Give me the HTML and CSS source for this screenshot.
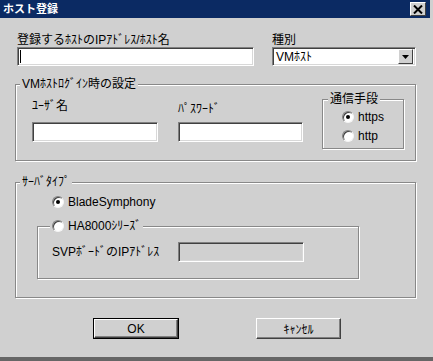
FILE: index.html
```html
<!DOCTYPE html>
<html lang="ja">
<head>
  <meta charset="UTF-8" />
  <title>ホスト登録</title>
  <link rel="stylesheet" href="styles.css">
</head>
<body>
  <div class="window">
    <div class="titlebar">
      <span class="title">ホスト登録</span>
      <span class="close">
        <svg width="10" height="9" viewBox="0 0 10 9"><path d="M1 0.5 L9 8.5 M9 0.5 L1 8.5" stroke="#000" stroke-width="2" fill="none"/></svg>
      </span>
    </div>

    <div class="content">
      <!-- host / kind -->
      <div class="row-top">
        <div class="host">
          <div class="label">登録するﾎｽﾄのIPｱﾄﾞﾚｽ/ﾎｽﾄ名</div>
          <div class="textbox"><span class="caret"></span></div>
        </div>
        <div class="kind">
          <div class="label">種別</div>
          <div class="select">
            <span class="select-text">VMﾎｽﾄ</span>
            <span class="drop">
              <svg width="7" height="4" viewBox="0 0 7 4"><path d="M0 0 H7 L3.5 4 Z" fill="#000"/></svg>
            </span>
          </div>
        </div>
      </div>

      <!-- login -->
      <div class="group login">
        <div class="group-title">VMﾎｽﾄﾛｸﾞｲﾝ時の設定</div>
        <div class="login-row">
          <div class="user">
            <div class="label user-label">ﾕｰｻﾞ名</div>
            <div class="textbox tall"></div>
          </div>
          <div class="pass">
            <div class="label pass-label">ﾊﾟｽﾜｰﾄﾞ</div>
            <div class="textbox tall"></div>
          </div>
          <div class="group proto">
            <div class="group-title">通信手段</div>
            <div class="radio first"><span class="dot checked"></span>https</div>
            <div class="radio second"><span class="dot"></span>http</div>
          </div>
        </div>
      </div>

      <!-- server type -->
      <div class="group server">
        <div class="group-title">ｻｰﾊﾞﾀｲﾌﾟ</div>
        <div class="radio blade"><span class="dot checked"></span>BladeSymphony</div>
        <div class="group sub">
          <div class="group-title radio-title"><span class="dot"></span>HA8000ｼﾘｰｽﾞ</div>
          <div class="svp-row">
            <span class="svp-label">SVPﾎﾞｰﾄﾞのIPｱﾄﾞﾚｽ</span>
            <div class="textbox disabled"></div>
          </div>
        </div>
      </div>

      <div class="buttons">
        <div class="btn-default"><button class="btn ok">OK</button></div>
        <button class="btn cancel">ｷｬﾝｾﾙ</button>
      </div>
    </div>
  </div>
</body>
</html>
```

FILE: styles.css
```css
body {
  margin: 0;
  font-family: "Liberation Sans", "Noto Sans CJK JP", sans-serif;
  font-size: 12px;
  line-height: 14px;
  color: #000;
  background: #d0d0d0;
}
.window {
  width: 433px;
  height: 361px;
  box-sizing: border-box;
  background: #d0d0d0;
  border-bottom: 4px solid #666;
}
.titlebar {
  height: 18px;
  margin-right: 3px;
  padding: 0 4px 0 3px;
  background: #0b2a63;
  display: flex;
  align-items: center;
  justify-content: space-between;
}
.title { color: #fff; font-weight: bold; font-size: 11px; }
.close {
  width: 16px;
  height: 14px;
  box-sizing: border-box;
  background: #d0d0d0;
  border: 1px solid;
  border-color: #fff #404040 #404040 #fff;
  display: flex;
  align-items: center;
  justify-content: center;
}
.close svg { display: block; }

.content { padding: 15px 0 0 15px; }
.row-top { display: flex; }
.host { margin-left: 2px; width: 237px; }
.kind { margin-left: 18px; width: 144px; }

.textbox {
  height: 19px;
  box-sizing: border-box;
  background: #fff;
  border: 1px solid;
  border-color: #808080 #fff #fff #808080;
  box-shadow: inset 1px 1px #404040, inset -1px -1px #d8d8d8;
  display: flex;
}
.textbox.tall { height: 20px; }
.textbox.disabled { background: #d0d0d0; width: 126px; height: 20px; }
.caret { width: 1px; height: 13px; margin: 2px 0 0 2px; background: #000; }

.select {
  height: 19px;
  box-sizing: border-box;
  background: #fff;
  border: 1px solid;
  border-color: #808080 #fff #fff #808080;
  box-shadow: inset 1px 1px #404040, inset -1px -1px #d8d8d8;
  display: flex;
  align-items: center;
  justify-content: space-between;
  padding: 0 2px 0 3px;
}
.drop {
  width: 15px;
  height: 15px;
  box-sizing: border-box;
  background: #d0d0d0;
  border: 1px solid;
  border-color: #fff #404040 #404040 #fff;
  display: flex;
  align-items: center;
  justify-content: center;
}
.drop svg { display: block; }

/* group boxes */
.group {
  box-sizing: border-box;
  border: 1px solid #888;
  box-shadow: inset 1px 1px #fff, 1px 1px #fff;
}
.group-title {
  width: max-content;
  margin: -8px 0 0 4px;
  padding: 0 2px;
  background: #d0d0d0;
}

.login { width: 401px; margin-top: 18px; padding-bottom: 11px; }
.login-row { display: flex; margin: 8px 0 0 16px; }
.user { width: 126px; }
.pass { width: 125px; margin-left: 20px; }
.user-label { margin-bottom: 9px; }
.pass-label { margin: 3px 0 6px; }
.proto { width: 82px; height: 50px; margin-left: 19px; }
.proto .group-title { margin-left: 5px; }
.proto .radio { padding-left: 19px; }
.proto .first { margin-top: 4px; }
.proto .second { margin-top: 5px; }

.radio { display: flex; align-items: center; height: 14px; }
.dot {
  width: 12px;
  height: 12px;
  box-sizing: border-box;
  margin-right: 4px;
  border-radius: 50%;
  background: #fff;
  border: 1px solid;
  border-color: #808080 #f4f4f4 #f4f4f4 #808080;
  box-shadow: inset 1px 1px #404040;
  display: flex;
  align-items: center;
  justify-content: center;
}
.dot.checked::after {
  content: "";
  width: 4px;
  height: 4px;
  border-radius: 50%;
  background: #000;
}

.server { width: 401px; margin-top: 21px; padding-bottom: 18px; }
.blade { margin: 6px 0 0 36px; }
.sub { width: 322px; margin: 17px 0 0 21px; padding-bottom: 16px; }
.radio-title { display: flex; align-items: center; margin-left: 12px; }
.svp-row { display: flex; align-items: center; margin: 9px 0 0 14px; }
.svp-label { width: 126px; }

.buttons { display: flex; align-items: center; margin-top: 20px; padding-left: 78px; }
.btn {
  font-family: inherit;
  font-size: 12px;
  height: 21px;
  padding: 0;
  background: #d0d0d0;
  color: #000;
  border: 1px solid;
  border-color: #fff #404040 #404040 #fff;
  box-shadow: inset -1px -1px #808080;
}
.btn-default { border: 1px solid #000; display: flex; }
.ok { width: 84px; height: 19px; }
.cancel { width: 85px; margin-left: 77px; }
```
